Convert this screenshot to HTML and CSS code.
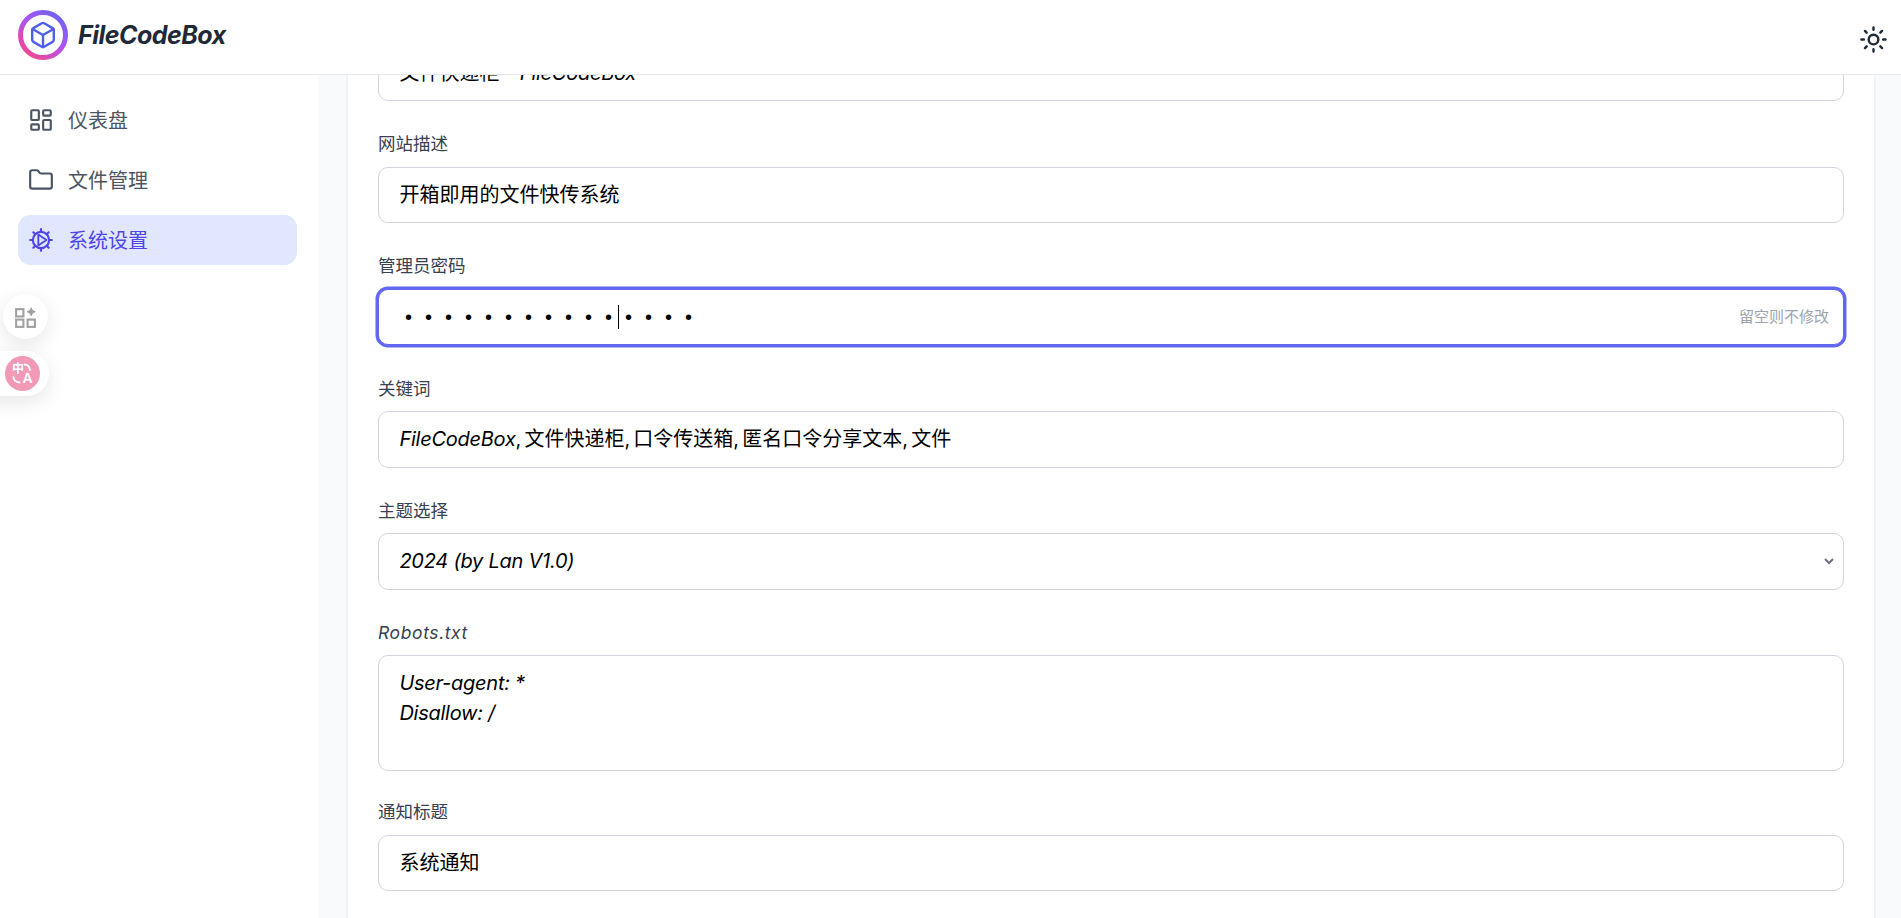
FILE: index.html
```html
<!DOCTYPE html>
<html lang="zh-CN">
<head>
<meta charset="utf-8">
<title>FileCodeBox</title>
<link rel="stylesheet" href="styles.css">
</head>
<body>
<header class="topbar">
  <div class="brand">
    <div class="logo">
      <svg class="logo-ring" viewBox="0 0 50 50" width="50" height="50">
        <defs>
          <linearGradient id="ring" x1="1" y1="0" x2="0.3" y2="1">
            <stop offset="0" stop-color="#6366f1"/>
            <stop offset="0.5" stop-color="#a855f7"/>
            <stop offset="1" stop-color="#ec4899"/>
          </linearGradient>
        </defs>
        <circle cx="25" cy="25" r="22.500" fill="none" stroke="url(#ring)" stroke-width="5"/>
        <g transform="translate(10.600 10.600) scale(1.2)" fill="none" stroke="#4f5fe8" stroke-width="2" stroke-linecap="round" stroke-linejoin="round">
          <path d="M21 8a2 2 0 0 0-1-1.730l-7-4a2 2 0 0 0-2 0l-7 4A2 2 0 0 0 3 8v8a2 2 0 0 0 1 1.730l7 4a2 2 0 0 0 2 0l7-4A2 2 0 0 0 21 16Z"/>
          <path d="m3.300 7 8.700 5 8.700-5"/>
          <path d="M12 22V12"/>
        </g>
      </svg>
    </div>
    <span class="brand-name">FileCodeBox</span>
  </div>
  <svg class="sun" viewBox="0 0 24 24" width="29" height="29" fill="none" stroke="#1f2937" stroke-width="2" stroke-linecap="round" stroke-linejoin="round">
    <circle cx="12" cy="12" r="4"/>
    <path d="M12 2v2M12 20v2M4.930 4.930l1.410 1.410M17.660 17.660l1.410 1.410M2 12h2M20 12h2M6.340 17.660l-1.410 1.410M19.070 4.930l-1.410 1.410"/>
  </svg>
</header>
<div class="layout">
  <nav class="sidebar">
    <a class="nav-item">
      <svg viewBox="0 0 24 24" width="26" height="26" fill="none" stroke="currentColor" stroke-width="2" stroke-linecap="round" stroke-linejoin="round">
        <rect x="3" y="3" width="7" height="9" rx="1"/><rect x="14" y="3" width="7" height="5" rx="1"/><rect x="14" y="12" width="7" height="9" rx="1"/><rect x="3" y="16" width="7" height="5" rx="1"/>
      </svg>
      <span>仪表盘</span>
    </a>
    <a class="nav-item">
      <svg viewBox="0 0 24 24" width="26" height="26" fill="none" stroke="currentColor" stroke-width="2" stroke-linecap="round" stroke-linejoin="round">
        <path d="M20 20a2 2 0 0 0 2-2V8a2 2 0 0 0-2-2h-7.900a2 2 0 0 1-1.690-.9L9.600 3.900A2 2 0 0 0 7.930 3H4a2 2 0 0 0-2 2v13a2 2 0 0 0 2 2Z"/>
      </svg>
      <span>文件管理</span>
    </a>
    <a class="nav-item active">
      <svg viewBox="0 0 24 24" width="26" height="26" fill="none" stroke="currentColor" stroke-width="2" stroke-linecap="round" stroke-linejoin="round">
        <circle cx="12" cy="12" r="7.500"/>
        <path d="M12 2v2.500M12 19.500V22M2 12h2.500M19.500 12H22M4.900 4.900l1.800 1.800M17.300 17.300l1.800 1.800M4.900 19.100l1.800-1.800M17.300 6.700l1.800-1.800"/>
        <path d="M9.500 7v10l7.500-5Z" stroke-width="1.700"/>
      </svg>
      <span>系统设置</span>
    </a>
  </nav>
  <main class="content">
    <form class="card">
      <div class="field">
        <label class="label">网站名称</label>
        <div class="control">文件快递柜 - <em>FileCodeBox</em></div>
      </div>
      <div class="field">
        <label class="label">网站描述</label>
        <div class="control">开箱即用的文件快传系统</div>
      </div>
      <div class="field">
        <label class="label">管理员密码</label>
        <div class="control split focused">
          <div class="dots"><span>•</span><span>•</span><span>•</span><span>•</span><span>•</span><span>•</span><span>•</span><span>•</span><span>•</span><span>•</span><span>•</span><i class="caret"></i><span>•</span><span>•</span><span>•</span><span>•</span></div>
          <span class="hint">留空则不修改</span>
        </div>
      </div>
      <div class="field">
        <label class="label">关键词</label>
        <div class="control tight"><em>FileCodeBox</em>, 文件快递柜, 口令传送箱, 匿名口令分享文本, 文件</div>
      </div>
      <div class="field">
        <label class="label">主题选择</label>
        <div class="control split">
          <em>2024 (by Lan V1.0)</em>
          <svg class="chevron" viewBox="0 0 10 7" width="10" height="7" fill="none" stroke="#6b7280" stroke-width="2"><path d="M1 1l4 4 4-4"/></svg>
        </div>
      </div>
      <div class="field area-field">
        <label class="label"><em class="label-latin">Robots.txt</em></label>
        <div class="control area"><em>User-agent: *</em><em>Disallow: /</em></div>
      </div>
      <div class="field">
        <label class="label">通知标题</label>
        <div class="control">系统通知</div>
      </div>
    </form>
  </main>
</div>
<div class="float-btn grid-btn">
  <svg viewBox="0 0 24 24" width="25" height="25" fill="none" stroke="#a0a0a0" stroke-width="2">
    <rect x="3" y="4" width="7" height="7"/><rect x="3" y="14" width="7" height="7"/><rect x="14" y="14" width="7" height="7"/>
    <path d="M17.500 2.500c.4 2.600 1.400 3.600 4 4-2.600.4-3.600 1.400-4 4-.4-2.600-1.400-3.600-4-4 2.600-.4 3.600-1.400 4-4Z" fill="#a0a0a0" stroke-width="1"/>
  </svg>
</div>
<div class="float-btn lang-btn">
  <span class="lang-badge">
    <span class="zh">中</span><span class="en">A</span>
    <svg class="lang-arcs" viewBox="0 0 35 35" width="35" height="35" fill="none" stroke="#fff" stroke-width="1.800" stroke-linecap="round">
      <path d="M19.500 8.500c3 0 5 2 5.500 5.500"/>
      <path d="M8.500 21c0 3 2 5 6 5.500"/>
    </svg>
  </span>
</div>
</body>
</html>
```
FILE: styles.css
```css
* { box-sizing: border-box; }
html, body { margin: 0; height: 100%; overflow: hidden; }
body {
  font-family: "Inter", "Noto Sans CJK SC", sans-serif;
  color: #000;
  background: #fff;
  display: flex;
  flex-direction: column;
}
em { font-style: italic; font-weight: 450; letter-spacing: -0.25px; }

.topbar {
  flex: 0 0 75px;
  display: flex;
  align-items: center;
  justify-content: space-between;
  padding: 0 13px 0 18px;
  background: #fff;
  border-bottom: 1px solid #e5e7eb;
  z-index: 2;
}
.brand { display: flex; align-items: center; gap: 10px; margin-top: -5px; }
.logo { width: 50px; height: 50px; }
.logo-ring { display: block; }
.brand-name {
  font-size: 25px;
  font-weight: 700;
  font-style: italic;
  letter-spacing: -0.5px;
  color: #1f2937;
}
.sun { margin-top: 5px; }

.layout { flex: 1; display: flex; min-height: 0; }
.sidebar {
  flex: 0 0 318px;
  padding: 20px 21px 0 18px;
  display: flex;
  flex-direction: column;
  gap: 10px;
  background: #fff;
}
.nav-item {
  height: 50px;
  display: flex;
  align-items: center;
  gap: 14px;
  padding-left: 10px;
  border-radius: 12.500px;
  font-size: 20px;
  color: #4b5563;
}
.nav-item span { margin-top: -2px; }
.nav-item.active { background: #e0e7ff; color: #4f46e5; }

.content {
  flex: 1;
  min-width: 0;
  overflow: hidden;
  background: #f9fafb;
  padding: 0 27px 0 30px;
}
.card {
  margin-top: -65px;
  padding: 0 30px 60px;
  background: #fff;
  box-shadow: 0 1px 3px rgba(0, 0, 0, 0.1);
  display: flex;
  flex-direction: column;
  gap: 31.200px;
}
.field { display: flex; flex-direction: column; gap: 10.600px; }
.area-field { margin-bottom: -2.400px; }
.label {
  font-size: 17.500px;
  line-height: 24px;
  color: #374151;
}
.label-latin { font-weight: 400; letter-spacing: 0.6px; }
.control {
  height: 56.400px;
  padding: 0 12px 0 20.400px;
  border: 1.250px solid #d1d5db;
  border-radius: 10px;
  background: #fff;
  font-size: 20px;
  line-height: 54px;
  white-space: pre;
}
.control.tight { word-spacing: -2.500px; }
.control.split {
  display: flex;
  align-items: center;
  justify-content: space-between;
}
.control.area {
  height: 116px;
  padding-top: 12px;
  line-height: 30px;
}
.control.area em { display: block; }
.control.focused {
  border-color: #6366f1;
  box-shadow: 0 0 0 2.500px #6366f1;
}
.dots { display: flex; align-items: center; height: 24px; margin-left: -1px; }
.dots span { width: 20px; text-align: center; font-size: 20px; line-height: 24px; font-family: "Liberation Sans", sans-serif; }
.caret { width: 1px; height: 24px; margin-right: -1px; background: #000; }
.hint { font-size: 15px; line-height: 24px; color: #9ca3af; margin-right: 2px; }
.chevron { margin-right: -3px; }

.float-btn {
  position: absolute;
  height: 45px;
  display: flex;
  align-items: center;
  justify-content: center;
  background: #fff;
  box-shadow: 0 6px 20px rgba(0, 0, 0, 0.1);
  z-index: 3;
}
.grid-btn { left: 3px; top: 294px; width: 45px; border-radius: 50%; }
.grid-btn svg { margin-top: 1px; }
.lang-btn {
  left: -20px;
  top: 351px;
  width: 69px;
  border-radius: 0 23px 23px 0;
  justify-content: flex-end;
  padding-right: 9px;
}
.lang-badge {
  position: relative;
  width: 35px;
  height: 35px;
  border-radius: 50%;
  background: #f299b5;
  color: #fff;
}
.lang-badge .zh { position: absolute; left: 7px; top: 5px; font-size: 12px; line-height: 16px; font-weight: 700; }
.lang-badge .en { position: absolute; left: 17.500px; top: 14px; font-size: 14px; line-height: 16px; font-weight: 700; font-family: "Liberation Sans", sans-serif; }
.lang-arcs { position: absolute; left: 0; top: 0; }
```
